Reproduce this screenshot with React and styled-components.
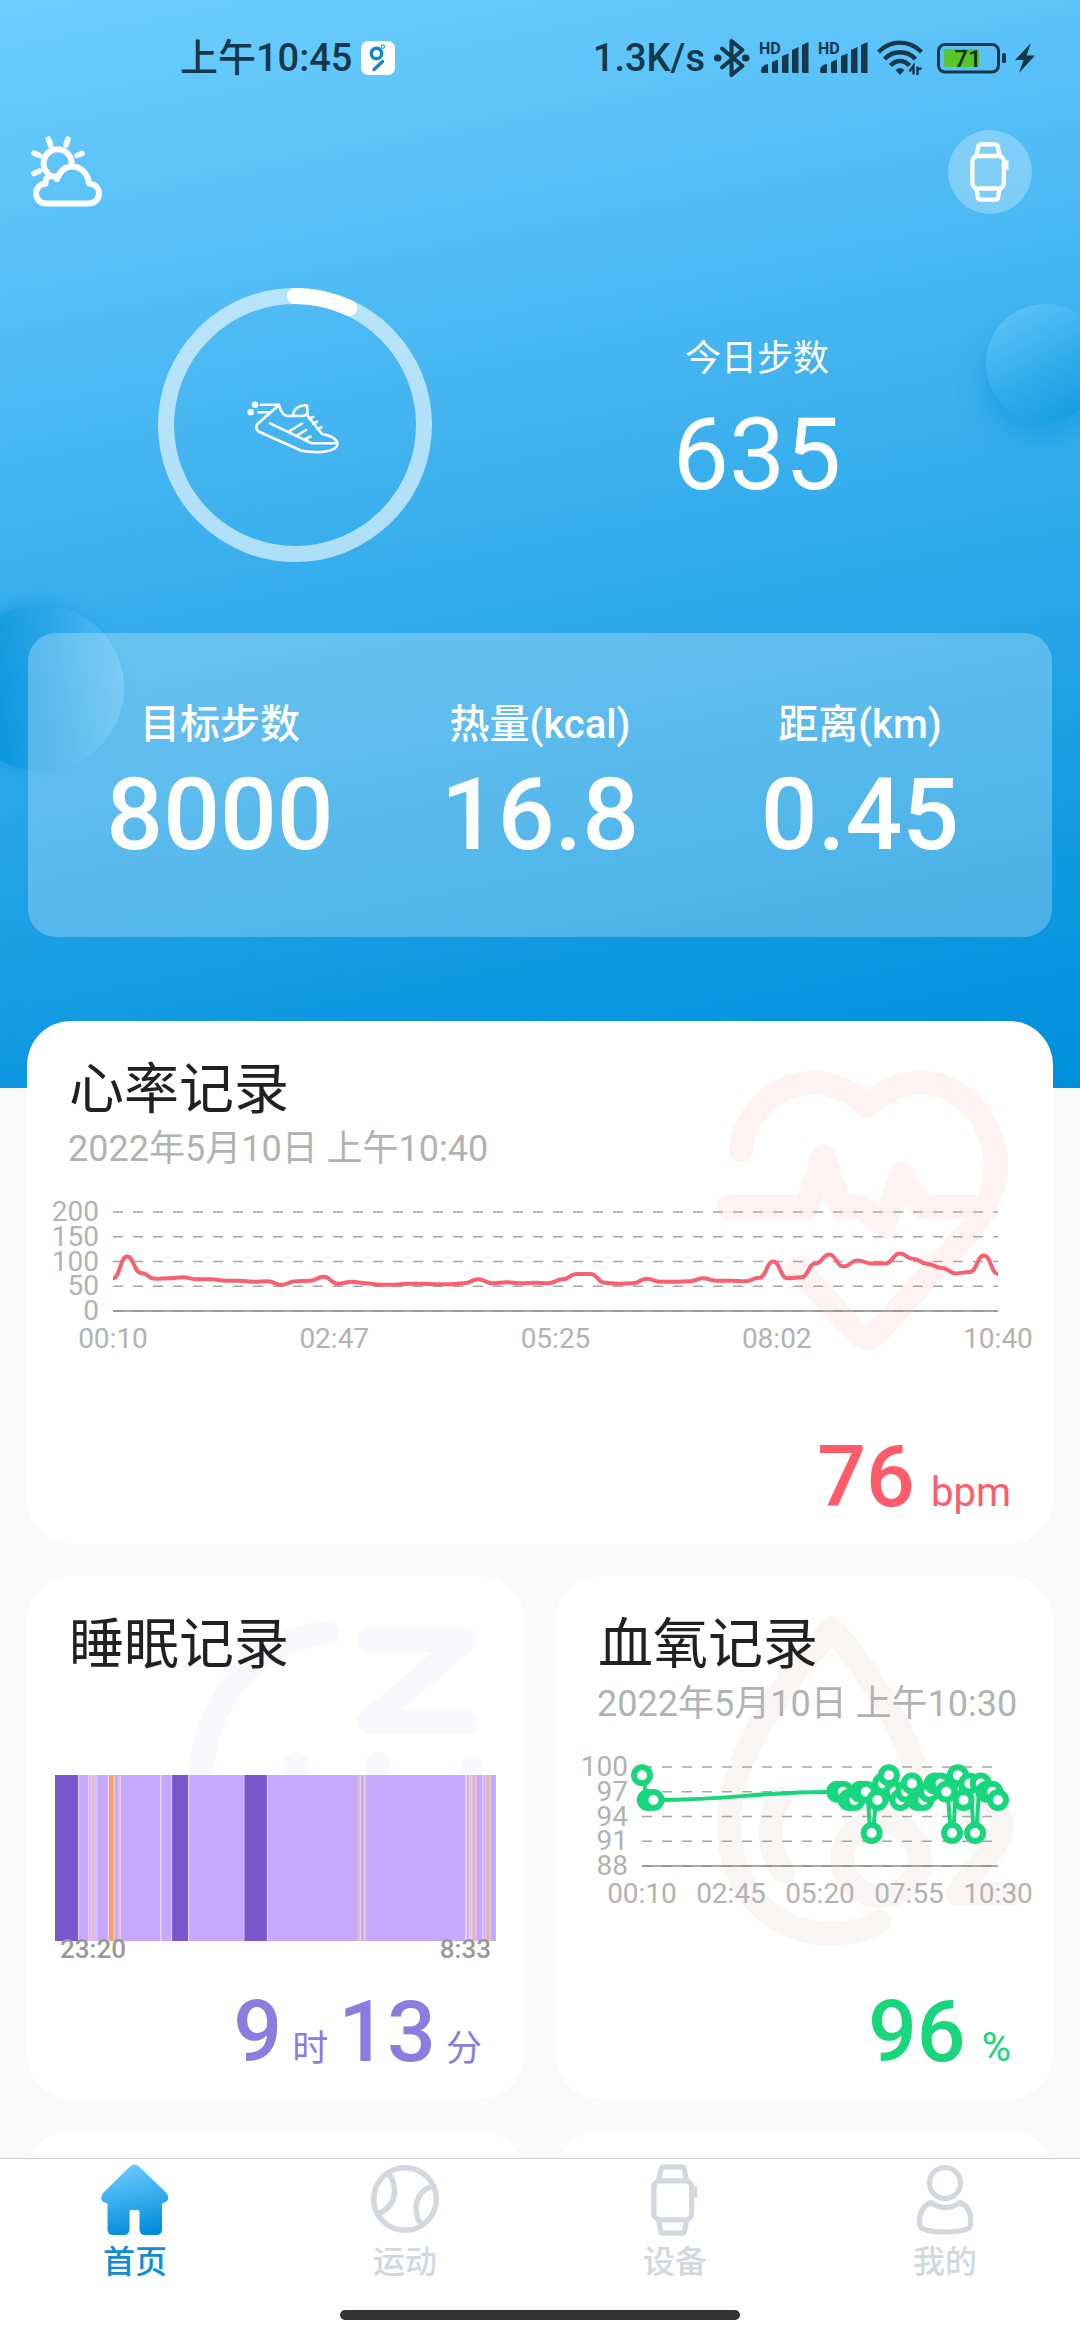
import React from 'react';
import styled, { createGlobalStyle } from 'styled-components';

const heartRates = [
  66, 110, 77, 65, 66, 68, 64, 64, 61, 61, 59, 60, 53, 60, 61, 69,
  55, 59, 56, 53, 53, 55, 55, 54, 54, 56, 64, 56, 58, 56, 57, 56,
  64, 75, 75, 57, 55, 56, 65, 59, 59, 60, 66, 61, 61, 60, 67, 100,
  66, 68, 96, 114, 90, 102, 96, 96, 116, 105, 95, 87, 76, 79, 112, 75,
].map((value, slot) => ({ slot, value }));

// first three readings come just after midnight, the rest start at slot 34
const oxygenLevels = [
  { slot: 0, value: 99 },
  { slot: 1, value: 96 },
  { slot: 2, value: 96 },
  ...[
    97, 97, 96, 96, 97, 97, 92, 96, 98, 99, 97, 96, 97, 98, 96,
    96, 97, 98, 98, 97, 92, 99, 96, 98, 92, 98, 97, 97, 96,
  ].map((value, i) => ({ slot: 34 + i, value })),
];

const DEEP = '#7a55cb';
const AWAKE = '#ff9f4f';
const FAINT_AWAKE = '#f2c2b8';
const GAP = '#e2d4fc';

// start and width of each stretch, over a night that is 1280 wide
const sleepStages = [
  [0, 67, DEEP], [67, 3, GAP],
  [96, 3, GAP], [100, 4, FAINT_AWAKE], [105, 3, GAP], [112, 3, GAP], [115, 4, FAINT_AWAKE], [120, 3, GAP],
  [153, 4, GAP], [157, 13, AWAKE], [170, 3, GAP],
  [183, 3, FAINT_AWAKE], [187, 4, GAP],
  [305, 4, '#ecd6ee'],
  [337, 3, GAP], [340, 46, DEEP], [386, 3, GAP],
  [547, 3, GAP], [550, 65, DEEP], [615, 3, GAP],
  [879, 5, FAINT_AWAKE], [885, 3, GAP], [896, 3, GAP], [899, 5, '#f5bd9c'],
  [1190, 6, GAP], [1201, 4, GAP], [1206, 6, '#f5ccb8'], [1213, 6, '#e6b5a4'], [1220, 3, GAP],
  [1240, 4, GAP], [1248, 4, '#f5ccb8'], [1253, 8, '#f2ae86'], [1261, 3, GAP],
];

const WatchIcon = ({ width, height }) => (
  <svg width={width} height={height} viewBox="0 0 40 60" fill="none" stroke="currentColor" strokeWidth="4.4" strokeLinejoin="round">
    <path d="M6.5 13 8.3 4.6Q8.8 2.4 11 2.4h14Q27.2 2.4 27.7 4.6L29.5 13" />
    <rect x="2.4" y="14" width="31.5" height="32.5" rx="5.5" />
    <path d="M6.5 47.5 8 55.6Q8.4 57.6 10.4 57.6h15.2Q27.6 57.6 28 55.6L29.5 47.5" />
    <path d="M36.5 18.5v9.5" strokeWidth="4" />
  </svg>
);

const WeatherIcon = () => (
  <svg width="72" height="72" viewBox="0 0 72 72" fill="none" stroke="#fff" strokeWidth="6" strokeLinecap="round" strokeLinejoin="round">
    <path d="M15 67.5C9 67.5 5 62.5 5 57.5c0-5 4-9.5 9.5-10C14 42 17 40 20 40c3 0 5 1.500 6 3C29 35 34 30.500 41 30.500c9 0 16 7.500 17 17C64 48 68 52 68 57.500c0 6-5 10-10 10Z" />
    <path d="M17 37.500A14 14 0 1 1 40.500 29" />
    <path d="M17.500 3.200 19.500 9M37 3.200 35 9M3 17.200 8.500 19.500M51 17.500 46 19.500M3 37.500 8.500 35.200" strokeWidth="5.600" />
  </svg>
);

const HomeIcon = () => (
  <svg width="70" height="72" viewBox="0 0 70 72">
    <defs>
      <linearGradient id="homeFill" x1="0.4" y1="0" x2="0.6" y2="1">
        <stop offset="0" stopColor="#6bcaff" />
        <stop offset="1" stopColor="#008cda" />
      </linearGradient>
    </defs>
    <path
      fill="url(#homeFill)"
      d="M30.5 2Q34.5-1.2 38.5 2L66.5 29Q70 34 66.5 37.5 64.5 39.3 62 39.3V65Q62 71 56 71H45.5Q39.5 71 39.5 65V48Q39.5 46 37.5 46h-6Q29.5 46 29.5 48V65Q29.5 71 23.5 71H13.5Q7.5 71 7.5 65V39.3Q5 39.3 3 37.5-.5 34 3 29Z"
    />
  </svg>
);

const BallIcon = () => (
  <svg width="70" height="72" viewBox="0 0 70 72" fill="none" stroke="currentColor" strokeWidth="5.5">
    <circle cx="35" cy="35" r="31.3" />
    <path d="M18.5 9.5C28 22 27 42 9.5 49" />
    <path d="M61.5 22.5C45 28 42 47 51 60.5" />
  </svg>
);

const PersonIcon = () => (
  <svg width="70" height="72" viewBox="0 0 70 72" fill="none" stroke="currentColor" strokeWidth="5.2" strokeLinejoin="round">
    <circle cx="35" cy="19" r="15.5" />
    <path d="M21 38.5C13 42 9.6 49 9.6 57v3.5C9.6 66 22 68 35 68s25.7-2 25.7-7.5V57C60.7 49 58 42 50 38.5Q36 48.5 21 38.5Z" />
  </svg>
);

const SignalIcon = () => (
  <svg width="50" height="36" viewBox="0 0 50 36" fill="currentColor">
    <text x="0" y="14" fontSize="16" fontWeight="700">HD</text>
    <path d="M2 31q0-6 7-7v9H3.5Q2 33 2 31ZM13 22l6-2.5V33h-4.5Q13 33 13 31.5ZM23 16l6.5-2.5V33H24.5Q23 33 23 31.5ZM33 10l6.5-3V33H34.5Q33 33 33 31.5ZM43 5l6.5-3V33H44.5Q43 33 43 31.5Z" />
  </svg>
);

const StepRing = ({ steps, goal }) => {
  // the round cap already covers about one percent of the ring
  const progress = (steps / goal) * 100 - 1;

  return (
    <svg width="274" height="274" viewBox="0 0 274 274" fill="none" stroke="#fff" strokeLinecap="round" strokeLinejoin="round">
      <circle cx="137" cy="137" r="129" strokeWidth="16" opacity="0.6" />
      <circle
        cx="137" cy="137" r="129" strokeWidth="16"
        pathLength="100" strokeDasharray={`${progress} 100`}
        transform="rotate(-90 137 137)"
      />
      <g strokeWidth="2.6">
        <circle cx="97" cy="116.7" r="2" fill="#fff" />
        <circle cx="92.7" cy="124.3" r="2" fill="#fff" />
        <path d="M103 116.7H121M100.5 124.3H112" />
        <path d="M121 117 99.5 136Q96.5 140 100.5 143.5L143.5 162.8C160 165.5 179 164 179.5 156 179 151 172 147.5 164 146L149.5 127.5" />
        <path d="M121 117C122.5 123 124.5 127 129 128H143Q148 127.5 149.5 126L149 117.5C141 116.5 135.5 121 135 127.5" />
        <path d="M112 135.3 154 155.3H179.5M144 135.5 131 143.5M148 142 139 147.5M152.5 148.5 146 152" />
        <path d="M151 130.5 155 129M155 135.5 159 133.8M159.5 141 163.5 139.3" />
      </g>
    </svg>
  );
};

// every stretch leaves and enters its readings level, halfway control points
const levelCurve = (points) =>
  points.reduce((path, [x, y], i) => {
    if (i === 0) return `M${x} ${y}`;
    const [px, py] = points[i - 1];
    const mid = (px + x) / 2;
    return `${path}C${mid} ${py} ${mid} ${y} ${x} ${y}`;
  }, '');

const LineChart = ({ width, readings, levels, times, color, dots, label }) => {
  const left = 86;
  const right = width - 55;
  const top = 24;
  const bottom = 123;
  const max = levels[0];
  const min = levels[levels.length - 1];
  const lastSlot = readings[readings.length - 1].slot;
  const points = readings.map(({ slot, value }) => [
    left + (slot / lastSlot) * (right - left),
    bottom - ((value - min) / (max - min)) * (bottom - top),
  ]);

  return (
    <ChartArea viewBox={`0 0 ${width} 168`} role="img" aria-label={label}>
      {levels.map((level, i) => {
        const y = top + (i / (levels.length - 1)) * (bottom - top);
        return (
          <g key={level}>
            <line x1={left} x2={right} y1={y} y2={y} stroke="#a6a6a6" strokeWidth="1.5" strokeDasharray="10 10" />
            <text x="72" y={y + 9} textAnchor="end">{level}</text>
          </g>
        );
      })}
      <line x1={left} x2={right} y1={bottom} y2={bottom} stroke="#8c8c8c" strokeWidth="1.5" />
      {times.map((time, i) => (
        <text key={time} x={left + (i / (times.length - 1)) * (right - left)} y="160" textAnchor="middle">
          {time}
        </text>
      ))}
      <path d={levelCurve(points)} fill="none" stroke={color} strokeWidth="4" />
      {dots && points.map(([x, y]) => (
        <circle key={x} cx={x} cy={y} r="8" fill="#fff" stroke={color} strokeWidth="6" />
      ))}
    </ChartArea>
  );
};

const SleepChart = () => (
  <SleepBars viewBox="0 0 1280 100" preserveAspectRatio="none" role="img" aria-label="睡眠阶段">
    <rect width="1280" height="100" fill="#c5a9ff" />
    {sleepStages.map(([start, size, fill]) => (
      <rect key={start} x={start} width={size} height="100" fill={fill} />
    ))}
  </SleepBars>
);

const HeartMark = () => (
  <Watermark $top={48} $right={43} $color="#fff2f3" width="296" height="286" viewBox="0 0 296 286">
    <path d="M27 81C31 44 61 14 100 14c20 0 39 9 53 23C167 23 186 14 206 14c42 0 75 36 75 82 0 24-9 47-24 64L165 262Q153 274 141 262L84 199" />
    <path d="M14 138H93L109 87 126 138H148L170 157 187 106 208 138H263" />
  </Watermark>
);

const SleepMark = () => (
  <Watermark $top={43} $right={37} $color="#f9f8fd" width="300" height="166" viewBox="0 0 300 166">
    <path d="M141 14C68 19 14 82 14 166" />
    <path d="M182 21H278L182 103H278" />
    <path d="M109 145V180M190 145V180M285 149V180" />
  </Watermark>
);

const OxygenMark = () => (
  <Watermark $top={37} $right={35} $color="#faf5f5" width="304" height="340" viewBox="0 0 304 340">
    <path d="M165 309C150 317 134 321 118 321 58 321 15 276 15 212 15 150 60 80 118 16 160 64 196 125 208 178" />
    <path d="M66 186C52 208 54 236 70 259" />
    <ellipse cx="167" cy="246" rx="39" ry="37" />
    <path d="M250 200C258 178 290 186 287 216 284 240 256 256 244 281H298" />
  </Watermark>
);

const tabs = [
  { name: '首页', icon: <HomeIcon />, active: true },
  { name: '运动', icon: <BallIcon /> },
  { name: '设备', icon: <WatchIcon width={48} height={72} /> },
  { name: '我的', icon: <PersonIcon /> },
];

const App = () => {
  return (
    <Screen>
      <GlobalStyle />
      <Content>
        <Hero>
          <Bubble />
          <SideBubble />
          <StatusBar>
            <StatusGroup>
              <span>上午10:45</span>
              <svg width="34" height="34" viewBox="0 0 34 34" fill="none" stroke="#1189c9" strokeWidth="3.4" strokeLinecap="round">
                <rect width="34" height="34" rx="7" fill="#fff" stroke="none" />
                <circle cx="15.5" cy="12.5" r="5.2" />
                <circle cx="21.8" cy="5.6" r="0.5" />
                <path d="M21.5 20.5 13 28.5" />
              </svg>
            </StatusGroup>
            <StatusGroup>
              <span>1.3K/s</span>
              <svg width="36" height="40" viewBox="0 0 36 40" fill="none" stroke="currentColor" strokeWidth="4" strokeLinejoin="round" strokeLinecap="round">
                <path d="M8 10.5 28.5 28 17.5 37V3L28.5 12 8 29.5" />
                <path d="M3.5 20H4M31.5 20H32" strokeWidth="7" />
              </svg>
              <SignalIcon />
              <SignalIcon />
              <svg width="48" height="36" viewBox="0 0 48 36" fill="none" stroke="currentColor" strokeWidth="4.4">
                <path d="M1.5 12C14-.5 32-.5 44.5 12M7.5 19C16 10 30 10 38.5 19M13.5 25.5C19 19.5 27 19.5 32.5 25.5" />
                <path d="M18.5 30Q23 26 27.5 30L23 35Z" fill="currentColor" stroke="none" />
                <path d="M36.5 34.5V26L32.5 31.5M40.5 35V26.5M40.5 35V29L44.5 28.5" strokeWidth="2.4" />
              </svg>
              <svg width="72" height="32" viewBox="-3 0 72 32">
                <rect x="1.5" y="2.5" width="60" height="27.500" rx="6.500" fill="none" stroke="currentColor" strokeWidth="3" />
                <rect x="65" y="11" width="4" height="10" rx="1.500" fill="currentColor" />
                <rect x="7" y="7" width="35" height="18" rx="2" fill="#57c62b" />
                <text x="31" y="25" fontSize="24" textAnchor="middle" fill="#12331f">71</text>
              </svg>
              <svg width="20" height="30" viewBox="0 0 20 30" fill="currentColor">
                <path d="M16 0 0 17H8.5L4 30 20 12.5H11.5Z" />
              </svg>
            </StatusGroup>
          </StatusBar>

          <Toolbar>
            <PlainButton aria-label="天气">
              <WeatherIcon />
            </PlainButton>
            <RoundButton aria-label="手表">
              <WatchIcon width={40} height={60} />
            </RoundButton>
          </Toolbar>

          <Summary>
            <StepRing steps={635} goal={8000} />
            <Today>
              <TodayLabel>今日步数</TodayLabel>
              <TodayValue>635</TodayValue>
            </Today>
          </Summary>

          <Stats>
            <Stat>
              <dt>目标步数</dt>
              <dd>8000</dd>
            </Stat>
            <Stat>
              <dt>热量(kcal)</dt>
              <dd>16.8</dd>
            </Stat>
            <Stat>
              <dt>距离(km)</dt>
              <dd>0.45</dd>
            </Stat>
          </Stats>
        </Hero>

        <Cards>
          <Card $wide>
            <HeartMark />
            <CardTitle>心率记录</CardTitle>
            <CardDate>2022年5月10日 上午10:40</CardDate>
            <LineChart
              width={1026}
              readings={heartRates}
              levels={[200, 150, 100, 50, 0]}
              times={['00:10', '02:47', '05:25', '08:02', '10:40']}
              color="#f9606f"
              label="心率"
            />
            <Reading $color="#ff5b6b">
              <strong>76</strong>
              <span>bpm</span>
            </Reading>
          </Card>

          <Card>
            <SleepMark />
            <CardTitle>睡眠记录</CardTitle>
            <SleepSection>
              <SleepChart />
              <SleepTimes>
                <span>23:20</span>
                <span>8:33</span>
              </SleepTimes>
            </SleepSection>
            <Reading $color="#8d7ce0" $compact>
              <strong>9</strong>
              <span>时</span>
              <strong>13</strong>
              <span>分</span>
            </Reading>
          </Card>

          <Card>
            <OxygenMark />
            <CardTitle>血氧记录</CardTitle>
            <CardDate>2022年5月10日 上午10:30</CardDate>
            <LineChart
              width={497}
              readings={oxygenLevels}
              levels={[100, 97, 94, 91, 88]}
              times={['00:10', '02:45', '05:20', '07:55', '10:30']}
              color="#17d67c"
              label="血氧"
              dots
            />
            <Reading $color="#17d67c">
              <strong>96</strong>
              <span>%</span>
            </Reading>
          </Card>

          <Card />
          <Card />
        </Cards>
      </Content>

      <BottomBar>
        <Tabs>
          {tabs.map((tab) => (
            <Tab key={tab.name} href="#" $active={tab.active}>
              {tab.icon}
              {tab.name}
            </Tab>
          ))}
        </Tabs>
        <HomeIndicator />
      </BottomBar>
    </Screen>
  );
};

const GlobalStyle = createGlobalStyle`
  * {
    box-sizing: border-box;
  }

  body {
    margin: 0;
    background: #fafafa;
    font-family: Roboto, 'Noto Sans CJK SC', sans-serif;
  }

  svg {
    display: block;
    flex-shrink: 0;
  }
`;

const Screen = styled.div`
  display: flex;
  flex-direction: column;
  height: 100vh;
  overflow: hidden;
`;

const Content = styled.main`
  flex: 1;
  min-height: 0;
  overflow: hidden;
`;

const Hero = styled.header`
  position: relative;
  padding-bottom: 151px;
  overflow: hidden;
  color: #fff;
  background: linear-gradient(169deg, #6dceff 0%, #3fb2ef 42%, #0d98e1 84%, #008fdb 100%);
`;

const Bubble = styled.div`
  position: absolute;
  top: 304px;
  right: -24px;
  width: 118px;
  height: 118px;
  border-radius: 50%;
  background: linear-gradient(150deg, #60c4f9 5%, #2fabea 55%, #109ae0 95%);
  box-shadow: -2px 18px 24px rgba(8, 146, 219, 0.5);
`;

const SideBubble = styled.div`
  position: absolute;
  top: 605px;
  left: -42px;
  width: 166px;
  height: 166px;
  border-radius: 50%;
  background: linear-gradient(80deg, #0c96de 22%, #2aa6e8 60%, #55bef6 100%);
  box-shadow: -8px -2px 16px rgba(8, 146, 219, 0.5);
`;

const StatusBar = styled.div`
  position: relative;
  display: flex;
  align-items: center;
  justify-content: space-between;
  height: 116px;
  padding: 0 45px 0 180px;
  color: #17384a;
  font-size: 38px;
  font-weight: 500;
  line-height: 40px;
`;

const StatusGroup = styled.div`
  display: flex;
  align-items: center;
  gap: 9px;
`;

const Toolbar = styled.div`
  position: relative;
  display: flex;
  align-items: center;
  justify-content: space-between;
  padding: 14px 48px 0 31px;
`;

const PlainButton = styled.button`
  padding: 0;
  border: none;
  background: none;
  color: #fff;
  cursor: pointer;
`;

const RoundButton = styled(PlainButton)`
  display: flex;
  align-items: center;
  justify-content: center;
  width: 84px;
  height: 84px;
  border-radius: 50%;
  background: rgba(255, 255, 255, 0.28);
`;

const Summary = styled.section`
  position: relative;
  display: grid;
  grid-template-columns: 1fr 1fr;
  align-items: center;
  justify-items: center;
  margin-top: 74px;
  padding: 0 92px 0 64px;
`;

const Today = styled.div`
  display: flex;
  flex-direction: column;
  gap: 8px;
  padding-top: 4px;
  text-align: center;
`;

const TodayLabel = styled.span`
  font-size: 36px;
  line-height: 48px;
`;

const TodayValue = styled.span`
  font-size: 100px;
  line-height: 128px;
`;

const Stats = styled.dl`
  position: relative;
  display: grid;
  grid-template-columns: repeat(3, 1fr);
  margin: 71px 28px 0;
  padding: 68px 32px 74px;
  border-radius: 28px;
  background: rgba(255, 255, 255, 0.26);
`;

const Stat = styled.div`
  display: flex;
  flex-direction: column;
  gap: 18px;
  text-align: center;
  font-weight: 500;

  dt {
    font-size: 40px;
    line-height: 48px;
  }

  dd {
    margin: 0;
    font-size: 100px;
    line-height: 96px;
  }
`;

const Cards = styled.section`
  position: relative;
  display: grid;
  grid-template-columns: 1fr 1fr;
  gap: 32px;
  margin-top: -67px;
  padding: 0 27px;
`;

const Card = styled.article`
  position: relative;
  display: flex;
  flex-direction: column;
  grid-column: ${(props) => (props.$wide ? '1 / -1' : 'auto')};
  min-height: 523px;
  padding: 28px 0 24px;
  border-radius: 44px;
  background: #fff;
`;

const Watermark = styled.svg`
  position: absolute;
  top: ${(props) => props.$top}px;
  right: ${(props) => props.$right}px;
  fill: none;
  stroke: ${(props) => props.$color};
  stroke-width: 24px;
  stroke-linecap: round;
  stroke-linejoin: round;
`;

const CardTitle = styled.h2`
  position: relative;
  margin: 0;
  padding-left: 42px;
  color: #212121;
  font-size: 55px;
  font-weight: 400;
  line-height: 80px;
`;

const CardDate = styled.p`
  position: relative;
  margin: 0;
  padding-left: 41px;
  color: #b2b2b2;
  font-size: 36px;
  line-height: 40px;
  white-space: nowrap;
`;

const ChartArea = styled.svg`
  position: relative;
  width: 100%;
  height: auto;
  margin-top: 19px;
  overflow: visible;

  text {
    fill: #b2b2b2;
    font-size: 28px;
  }
`;

const SleepSection = styled.div`
  position: relative;
  margin-top: 91px;
  padding: 0 28px;
`;

const SleepBars = styled.svg`
  width: 100%;
  height: 166px;
`;

const SleepTimes = styled.div`
  display: flex;
  justify-content: space-between;
  padding: 0 5px;
  color: #999;
  font-size: 26px;
  font-weight: 500;
  line-height: 16px;
`;

const Reading = styled.div`
  position: relative;
  display: flex;
  align-items: baseline;
  justify-content: flex-end;
  gap: ${(props) => (props.$compact ? 10 : 16)}px;
  margin-top: auto;
  padding-right: 42px;
  color: ${(props) => props.$color};
  font-size: ${(props) => (props.$compact ? 36 : 40)}px;
  line-height: 40px;

  strong {
    font-size: 86px;
    font-weight: 500;
    line-height: 86px;
  }
`;

const BottomBar = styled.footer`
  position: relative;
  border-top: 1px solid #cfcfcf;
  padding: 5px 0 20px;
  background: #fff;
`;

const Tabs = styled.nav`
  display: grid;
  grid-template-columns: repeat(4, 1fr);
`;

const Tab = styled.a`
  display: flex;
  flex-direction: column;
  align-items: center;
  color: ${(props) => (props.$active ? '#108ed3' : '#d3d8df')};
  font-size: 32px;
  font-weight: 500;
  line-height: 52px;
  text-decoration: none;
`;

const HomeIndicator = styled.div`
  width: 37%;
  height: 10px;
  margin: 22px auto 0;
  border-radius: 5px;
  background: #333;
`;

export default App;
